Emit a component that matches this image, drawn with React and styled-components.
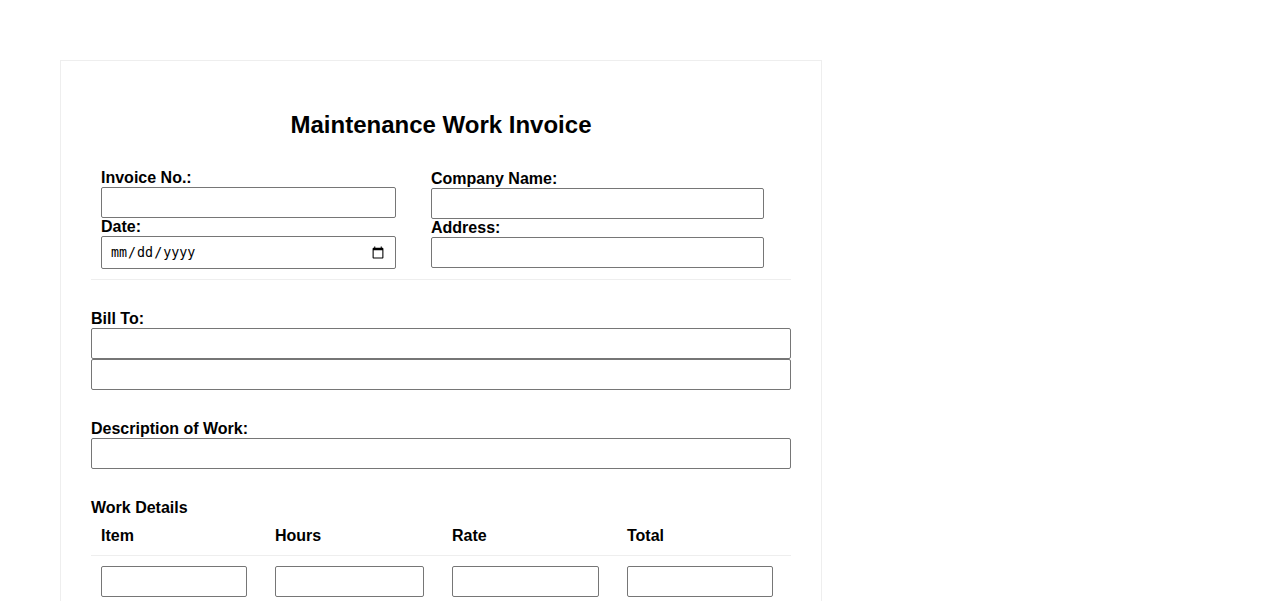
import React from "react";
import styled, { createGlobalStyle } from "styled-components";

const GlobalStyle = createGlobalStyle`
    body {
        margin: 0;
        background: #fff;
        font-family: "Liberation Sans", Arial, sans-serif;
        color: #000;
    }
`;

const Card = styled.div`
    max-width: 700px;
    margin: 60px;
    padding: 30px;
    border: 1px solid #eee;
    background: #fff;
`;

const Title = styled.h2`
    margin: 20px 0;
    font-size: 24px;
    font-weight: bold;
    text-align: center;
`;

const HeaderGrid = styled.div`
    display: grid;
    grid-template-columns: 330px 370px;
    align-items: center;
    border-bottom: 1px solid #eee;
`;

const HeaderCell = styled.div`
    padding: 10px;
`;

const Label = styled.label`
    display: block;
    font-size: 16px;
    font-weight: bold;
`;

const Input = styled.input`
    display: block;
    box-sizing: border-box;
    width: ${({ $width }) => $width || "95%"};
    height: ${({ type }) => (type === "date" ? "32.8px" : "31px")};
    padding: 5px 8px;
    margin: 0;
    border: 1px solid #767676;
    border-radius: 2px;
    background: #fff;
    font-size: 13.33px;
`;

const Section = styled.div`
    margin-top: 30px;
`;

const SectionTitle = styled.div`
    font-size: 16px;
    font-weight: bold;
`;

const DetailsGrid = styled.div`
    display: grid;
    grid-template-columns: 174px 177px 175px 174px;
`;

const HeadCell = styled.div`
    padding: 10px;
    font-size: 16px;
    font-weight: bold;
    border-bottom: 1px solid #eee;
`;

const BodyCell = styled.div`
    padding: 10px;
`;

const columns = ["Item", "Hours", "Rate", "Total"];

export default function App() {
    return (
        <>
            <GlobalStyle />
            <Card>
                <Title>Maintenance Work Invoice</Title>
                <HeaderGrid>
                    <HeaderCell>
                        <Label htmlFor="invoice-no">Invoice No.:</Label>
                        <Input id="invoice-no" type="text" />
                        <Label htmlFor="invoice-date">Date:</Label>
                        <Input id="invoice-date" type="date" />
                    </HeaderCell>
                    <HeaderCell>
                        <Label htmlFor="company">Company Name:</Label>
                        <Input id="company" type="text" />
                        <Label htmlFor="address">Address:</Label>
                        <Input id="address" type="text" />
                    </HeaderCell>
                </HeaderGrid>

                <Section>
                    <Label htmlFor="bill-to">Bill To:</Label>
                    <Input id="bill-to" type="text" $width="100%" />
                    <Input type="text" $width="100%" />
                </Section>

                <Section>
                    <Label htmlFor="description">Description of Work:</Label>
                    <Input id="description" type="text" $width="100%" />
                </Section>

                <Section>
                    <SectionTitle>Work Details</SectionTitle>
                    <DetailsGrid>
                        {columns.map((col) => (
                            <HeadCell key={col}>{col}</HeadCell>
                        ))}
                        {columns.map((col) => (
                            <BodyCell key={col}>
                                <Input type="text" />
                            </BodyCell>
                        ))}
                    </DetailsGrid>
                </Section>
            </Card>
        </>
    );
}
